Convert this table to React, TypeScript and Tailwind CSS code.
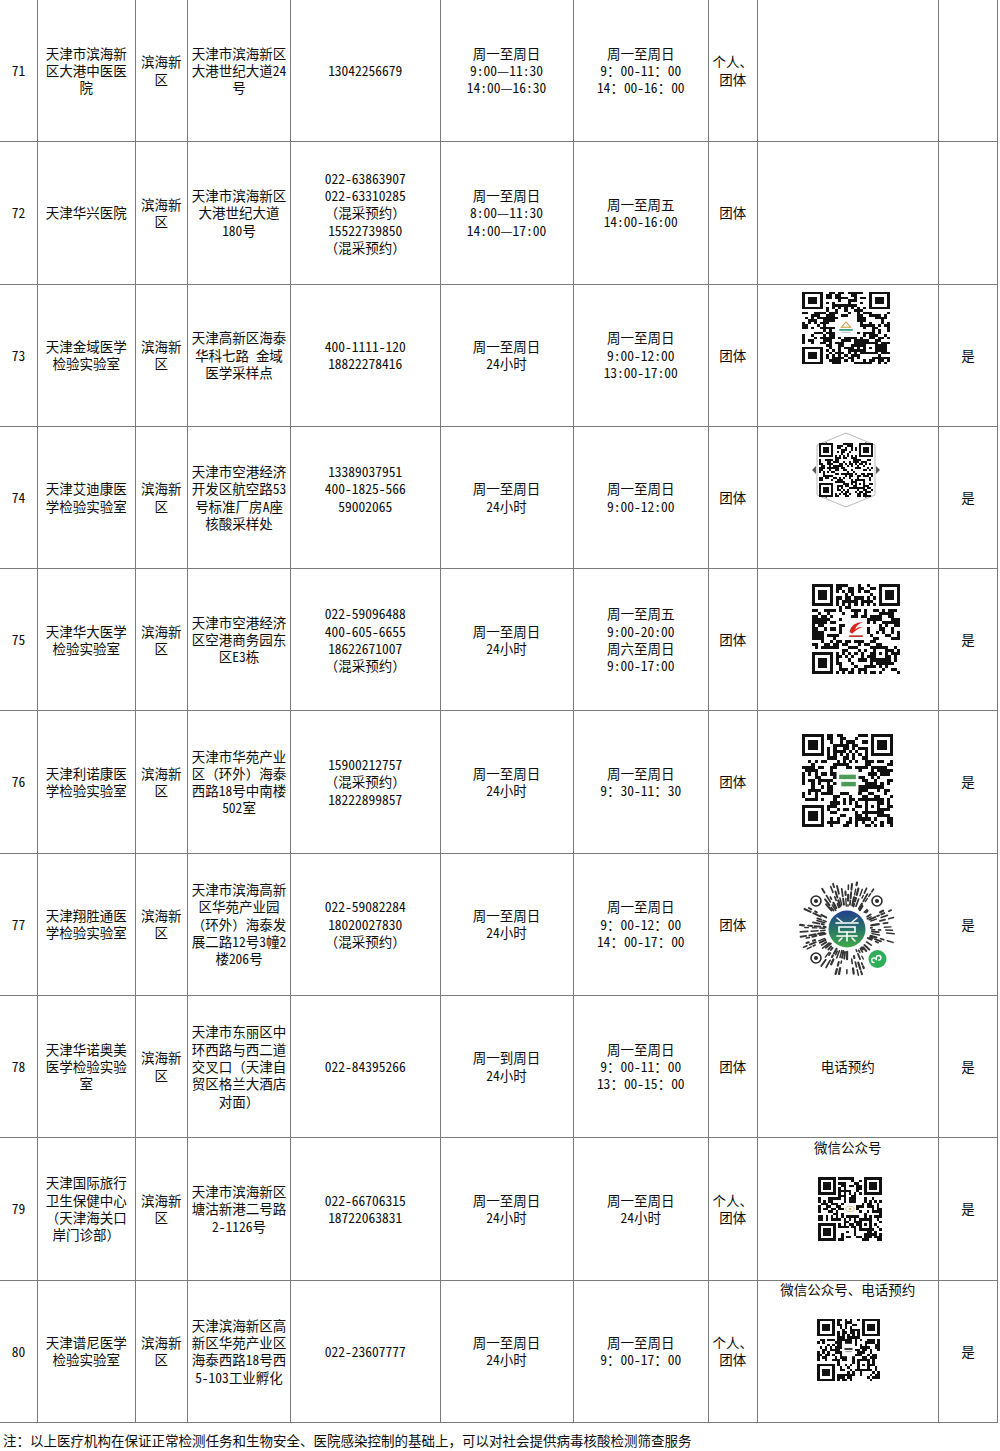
import React from "react";

function rng(seed: number) {
  let a = seed >>> 0;
  return () => {
    a |= 0;
    a = (a + 0x6d2b79f5) | 0;
    let t = Math.imul(a ^ (a >>> 15), 1 | a);
    t = (t + Math.imul(t ^ (t >>> 7), 61 | t)) ^ t;
    return ((t ^ (t >>> 14)) >>> 0) / 4294967296;
  };
}

function qrPath(n: number, seed: number, clear: number) {
  const rand = rng(seed);
  const g: number[][] = Array.from({ length: n }, () => Array(n).fill(0));
  for (let y = 0; y < n; y++) for (let x = 0; x < n; x++) g[y][x] = rand() < 0.5 ? 1 : 0;
  const finder = (ox: number, oy: number) => {
    for (let dy = -1; dy <= 7; dy++)
      for (let dx = -1; dx <= 7; dx++) {
        const x = ox + dx;
        const y = oy + dy;
        if (x < 0 || y < 0 || x >= n || y >= n) continue;
        const on =
          dx >= 0 && dx <= 6 && dy >= 0 && dy <= 6 &&
          (dx === 0 || dx === 6 || dy === 0 || dy === 6 || (dx >= 2 && dx <= 4 && dy >= 2 && dy <= 4));
        g[y][x] = on ? 1 : 0;
      }
  };
  finder(0, 0);
  finder(n - 7, 0);
  finder(0, n - 7);
  for (let i = 8; i < n - 8; i++) {
    g[6][i] = i % 2 === 0 ? 1 : 0;
    g[i][6] = i % 2 === 0 ? 1 : 0;
  }
  if (n >= 25) {
    const a = n - 7;
    for (let dy = -2; dy <= 2; dy++)
      for (let dx = -2; dx <= 2; dx++) g[a + dy][a + dx] = Math.max(Math.abs(dx), Math.abs(dy)) !== 1 ? 1 : 0;
  }
  if (clear > 0) {
    const s = Math.floor((n - clear) / 2);
    for (let y = s; y < s + clear; y++) for (let x = s; x < s + clear; x++) g[y][x] = 0;
  }
  let d = "";
  for (let y = 0; y < n; y++) for (let x = 0; x < n; x++) if (g[y][x]) d += `M${x} ${y}h1v1h-1z`;
  return d;
}

function QR({
  n,
  seed,
  w,
  h,
  clear = 0,
  logo,
}: {
  n: number;
  seed: number;
  w: number;
  h: number;
  clear?: number;
  logo?: React.ReactNode;
}) {
  const d = React.useMemo(() => qrPath(n, seed, clear), [n, seed, clear]);
  const s = Math.floor((n - clear) / 2);
  return (
    <svg width={w} height={h} viewBox={`0 0 ${n} ${n}`} preserveAspectRatio="none" shapeRendering="crispEdges">
      <path d={d} fill="#111" />
      {logo && clear > 0 ? (
        <g transform={`translate(${s} ${s}) scale(${clear / 10})`} shapeRendering="auto">
          {logo}
        </g>
      ) : null}
    </svg>
  );
}

function MiniCode() {
  const segs = React.useMemo(() => {
    const rand = rng(2077);
    const out: { x1: number; y1: number; x2: number; y2: number; w: number }[] = [];
    const cx = 48.5;
    const cy = 48;
    const avoid: [number, number, number][] = [
      [17, 20, 9],
      [78, 20, 9],
      [17, 77, 9],
      [78, 78, 12],
    ];
    const count = 76;
    for (let i = 0; i < count; i++) {
      const a = (i / count) * Math.PI * 2 + rand() * 0.04;
      let rad = 22 + rand() * 3;
      while (rad < 45) {
        const len = 1.5 + rand() * 7;
        const r1 = Math.min(rad + len, 47.5);
        const x1 = cx + Math.cos(a) * rad;
        const y1 = cy + Math.sin(a) * rad;
        const x2 = cx + Math.cos(a) * r1;
        const y2 = cy + Math.sin(a) * r1;
        const bad = avoid.some(
          ([ax, ay, ar]) => Math.hypot(x1 - ax, y1 - ay) < ar || Math.hypot(x2 - ax, y2 - ay) < ar
        );
        if (!bad && rand() < 0.8) out.push({ x1, y1, x2, y2, w: 1.4 + rand() * 0.9 });
        rad = r1 + 2 + rand() * 3.5;
      }
    }
    return out;
  }, []);
  const eye = (x: number, y: number) => (
    <g>
      <circle cx={x} cy={y} r={5} fill="none" stroke="#2a2a2a" strokeWidth={1.6} />
      <circle cx={x} cy={y} r={2} fill="#2a2a2a" />
    </g>
  );
  return (
    <svg width={97} height={96} viewBox="0 0 97 96">
      <defs>
        <linearGradient id="mcg" x1="0" y1="0" x2="0" y2="1">
          <stop offset="0" stopColor="#213f8f" />
          <stop offset="0.5" stopColor="#2a7466" />
          <stop offset="1" stopColor="#41ab48" />
        </linearGradient>
      </defs>
      {segs.map((s, i) => (
        <line key={i} x1={s.x1} y1={s.y1} x2={s.x2} y2={s.y2} stroke="#333" strokeWidth={s.w} strokeLinecap="round" />
      ))}
      {eye(17, 20)}
      {eye(78, 20)}
      {eye(17, 77)}
      <circle cx={48} cy={48} r={18.5} fill="url(#mcg)" />
      <g stroke="#fff" strokeWidth={1.6} fill="none" strokeLinecap="round">
        <path d="M38 37 L43 41 M58 37 L53 41" />
        <path d="M37 42 H59" />
        <path d="M40 46 H56 V51 H40 Z" />
        <path d="M38 55 H58" />
        <path d="M48 51 V60 M43 57 L40 60 M53 57 L56 60" />
      </g>
      <circle cx={78.5} cy={78} r={9} fill="#2fae5a" />
      <path
        d="M75 81.5 a2.3 2.3 0 1 1 2.3 -2.3 v-2.4 a2.3 2.3 0 1 1 2.3 2.3"
        fill="none"
        stroke="#fff"
        strokeWidth={1.4}
        strokeLinecap="round"
      />
    </svg>
  );
}

function QRInner({ n, seed, size }: { n: number; seed: number; size: number }) {
  const d = React.useMemo(() => qrPath(n, seed, 0), [n, seed]);
  return (
    <g transform={`scale(${size / n})`} shapeRendering="crispEdges">
      <path d={d} fill="#111" />
    </g>
  );
}

function HexQR() {
  return (
    <svg width={70} height={76} viewBox="0 0 70 76">
      <polygon points="35,1 64,13 64,63 35,75 6,63 6,13" fill="none" stroke="#a8a8a8" strokeWidth={0.8} />
      <polygon points="1,38 5,34 5,42" fill="#555" />
      <polygon points="69,38 65,34 65,42" fill="#555" />
      <path d="M9 13 L16 10 L16 13 Z M61 13 L54 10 L54 13 Z M9 63 L16 66 L16 63 Z M61 63 L54 66 L54 63 Z" fill="#444" />
      <g transform="translate(8 11)">
        <QRInner n={27} seed={74} size={54} />
      </g>
    </svg>
  );
}

const logo73 = (
  <g>
    <rect x={0} y={0} width={10} height={10} fill="#fff" />
    <path d="M5 1.6 L7.2 4.6 L2.8 4.6 Z" fill="none" stroke="#c79a3a" strokeWidth={0.5} />
    <rect x={1.8} y={5.6} width={6.4} height={1} fill="#3c9a7c" />
    <rect x={2.8} y={7.2} width={4.4} height={0.5} fill="#9bb" />
  </g>
);
const logo75 = (
  <g>
    <rect x={0} y={0} width={10} height={10} fill="#fff" />
    <path d="M2 6.4 Q2.6 2 8.4 1.8 Q5 3 4.6 5.2 Q6 3.9 8.2 4.1 Q5.2 5 3.2 7.2 Z" fill="#d8261c" />
    <rect x={1.8} y={7.9} width={6.4} height={0.8} fill="#c0392b" />
  </g>
);
const logo76 = (
  <g>
    <rect x={0} y={0} width={10} height={10} fill="#fff" />
    <rect x={1.2} y={2.4} width={7.6} height={2} fill="#4a9c57" />
    <rect x={2.2} y={5.6} width={6.6} height={2} fill="#4a9c57" />
  </g>
);
const logo79 = (
  <g>
    <circle cx={5} cy={5} r={4.6} fill="#fff" />
    <ellipse cx={5} cy={5} rx={3.4} ry={2} fill="none" stroke="#cbb777" strokeWidth={0.6} />
    <circle cx={5} cy={5} r={1} fill="#c8ae62" />
  </g>
);
const logo80 = (
  <g>
    <rect x={0} y={0} width={10} height={10} fill="#fff" />
    <rect x={1.8} y={3.4} width={6.4} height={1.6} fill="#3a3a3a" />
    <rect x={2.4} y={6} width={5.2} height={0.7} fill="#888" />
  </g>
);

function T({ s }: { s: string }) {
  const parts = s.split(/([\x20-\x7e]+)/);
  return (
    <>
      {parts.map((p, i) =>
        p === "" ? null : /^[\x20-\x7e]+$/.test(p) ? (
          <span key={i} className="[font-feature-settings:'hwid']">
            {p}
          </span>
        ) : (
          <React.Fragment key={i}>{p}</React.Fragment>
        )
      )}
    </>
  );
}

type Row = {
  no: string;
  name: string[];
  addr: string[];
  phone: string[];
  h1: string[];
  h2: string[];
  type: string[];
  qr: React.ReactNode;
  yes: boolean;
};

const H24 = ["周一至周日", "24小时"];

const rows: Row[] = [
  {
    no: "71",
    name: ["天津市滨海新", "区大港中医医", "院"],
    addr: ["天津市滨海新区", "大港世纪大道24", "号"],
    phone: ["13042256679"],
    h1: ["周一至周日", "9:00—11:30", "14:00—16:30"],
    h2: ["周一至周日", "9：00-11：00", "14：00-16：00"],
    type: ["个人、", "团体"],
    qr: null,
    yes: false,
  },
  {
    no: "72",
    name: ["天津华兴医院"],
    addr: ["天津市滨海新区", "大港世纪大道", "180号"],
    phone: ["022-63863907", "022-63310285", "（混采预约）", "15522739850", "（混采预约）"],
    h1: ["周一至周日", "8:00—11:30", "14:00—17:00"],
    h2: ["周一至周五", "14:00-16:00"],
    type: ["团体"],
    qr: null,
    yes: false,
  },
  {
    no: "73",
    name: ["天津金域医学", "检验实验室"],
    addr: ["天津高新区海泰", "华科七路 金域", "医学采样点"],
    phone: ["400-1111-120", "18822278416"],
    h1: H24,
    h2: ["周一至周日", "9:00-12:00", "13:00-17:00"],
    type: ["团体"],
    qr: (
      <div className="flex flex-col items-center pt-[7px] pr-[3px]">
        <QR n={29} seed={73} w={88} h={72} clear={7} logo={logo73} />
      </div>
    ),
    yes: true,
  },
  {
    no: "74",
    name: ["天津艾迪康医", "学检验实验室"],
    addr: ["天津市空港经济", "开发区航空路53", "号标准厂房A座", "核酸采样处"],
    phone: ["13389037951", "400-1825-566", "59002065", ""],
    h1: H24,
    h2: ["周一至周日", "9:00-12:00"],
    type: ["团体"],
    qr: (
      <div className="flex flex-col items-center pt-[5px] pr-[3px]">
        <HexQR />
      </div>
    ),
    yes: true,
  },
  {
    no: "75",
    name: ["天津华大医学", "检验实验室"],
    addr: ["天津市空港经济", "区空港商务园东", "区E3栋"],
    phone: ["022-59096488", "400-605-6655", "18622671007", "（混采预约）"],
    h1: H24,
    h2: ["周一至周五", "9:00-20:00", "周六至周日", "9:00-17:00"],
    type: ["团体"],
    qr: (
      <div className="flex flex-col items-center pt-[15px] pl-[16px]">
        <QR n={29} seed={75} w={88} h={90} clear={7} logo={logo75} />
      </div>
    ),
    yes: true,
  },
  {
    no: "76",
    name: ["天津利诺康医", "学检验实验室"],
    addr: ["天津市华苑产业", "区（环外）海泰", "西路18号中南楼", "502室"],
    phone: ["15900212757", "（混采预约）", "18222899857"],
    h1: H24,
    h2: ["周一至周日", "9：30-11：30"],
    type: ["团体"],
    qr: (
      <div className="flex flex-col items-center pt-[23px]">
        <QR n={29} seed={76} w={91} h={93} clear={7} logo={logo76} />
      </div>
    ),
    yes: true,
  },
  {
    no: "77",
    name: ["天津翔胜通医", "学检验实验室"],
    addr: ["天津市滨海高新", "区华苑产业园", "（环外）海泰发", "展二路12号3幢2", "楼206号"],
    phone: ["022-59082284", "18020027830", "（混采预约）"],
    h1: H24,
    h2: ["周一至周日", "9：00-12：00", "14：00-17：00"],
    type: ["团体"],
    qr: (
      <div className="flex flex-col items-center pt-[27px]">
        <MiniCode />
      </div>
    ),
    yes: true,
  },
  {
    no: "78",
    name: ["天津华诺奥美", "医学检验实验", "室"],
    addr: ["天津市东丽区中", "环西路与西二道", "交叉口（天津自", "贸区格兰大酒店", "对面）"],
    phone: ["022-84395266"],
    h1: ["周一到周日", "24小时"],
    h2: ["周一至周日", "9：00-11：00", "13：00-15：00"],
    type: ["团体"],
    qr: (
      <div className="flex h-full flex-col items-center justify-center">
        <div className="whitespace-nowrap">电话预约</div>
      </div>
    ),
    yes: true,
  },
  {
    no: "79",
    name: ["天津国际旅行", "卫生保健中心", "（天津海关口", "岸门诊部）"],
    addr: ["天津市滨海新区", "塘沽新港二号路", "2-1126号"],
    phone: ["022-66706315", "18722063831"],
    h1: H24,
    h2: H24,
    type: ["个人、", "团体"],
    qr: (
      <div className="flex flex-col items-center pt-[0.5px]">
        <div className="whitespace-nowrap">微信公众号</div>
        <div className="mt-[21px] pl-[5px]">
          <QR n={25} seed={79} w={64} h={64} clear={5} logo={logo79} />
        </div>
      </div>
    ),
    yes: true,
  },
  {
    no: "80",
    name: ["天津谱尼医学", "检验实验室"],
    addr: ["天津滨海新区高", "新区华苑产业区", "海泰西路18号西", "5-103工业孵化"],
    phone: ["022-23607777"],
    h1: H24,
    h2: ["周一至周日", "9：00-17：00"],
    type: ["个人、", "团体"],
    qr: (
      <div className="flex flex-col items-center pt-[0.5px]">
        <div className="whitespace-nowrap">微信公众号、电话预约</div>
        <div className="mt-[21px] pl-[2px]">
          <QR n={25} seed={80} w={63} h={62} clear={5} logo={logo80} />
        </div>
      </div>
    ),
    yes: true,
  },
];

function Lines({ lines }: { lines: string[] }) {
  return (
    <div className="flex flex-col items-center justify-center text-center border-l border-[#7a7a7a]">
      {lines.map((l, i) => (
        <div key={i} className="whitespace-nowrap">
          {l === "" ? "\u00a0" : <T s={l} />}
        </div>
      ))}
    </div>
  );
}

export default function App() {
  return (
    <div className="w-[1000px] min-h-[1451px] bg-white text-[#0d0d0d] font-['Noto_Sans_CJK_SC','Noto_Sans',sans-serif] text-[13.5px] leading-[17.3px]">
      <div className="w-[998px]">
        {rows.map((r) => (
          <div
            key={r.no}
            className="grid h-[142.3px] grid-cols-[37px_97.5px_52.5px_103px_149.5px_133px_135.5px_48.5px_181.5px_60px] border-b border-[#7a7a7a]"
          >
            <div className="flex items-center justify-center">
              <T s={r.no} />
            </div>
            <Lines lines={r.name} />
            <Lines lines={["滨海新", "区"]} />
            <Lines lines={r.addr} />
            <Lines lines={r.phone} />
            <Lines lines={r.h1} />
            <Lines lines={r.h2} />
            <Lines lines={r.type} />
            <div className="border-l border-[#7a7a7a]">{r.qr}</div>
            <div className="flex items-center justify-center border-x border-[#7a7a7a]">{r.yes ? "是" : ""}</div>
          </div>
        ))}
      </div>
      <div className="whitespace-nowrap pl-[3px] pt-[9px]">
        注：以上医疗机构在保证正常检测任务和生物安全、医院感染控制的基础上，可以对社会提供病毒核酸检测筛查服务
      </div>
    </div>
  );
}
